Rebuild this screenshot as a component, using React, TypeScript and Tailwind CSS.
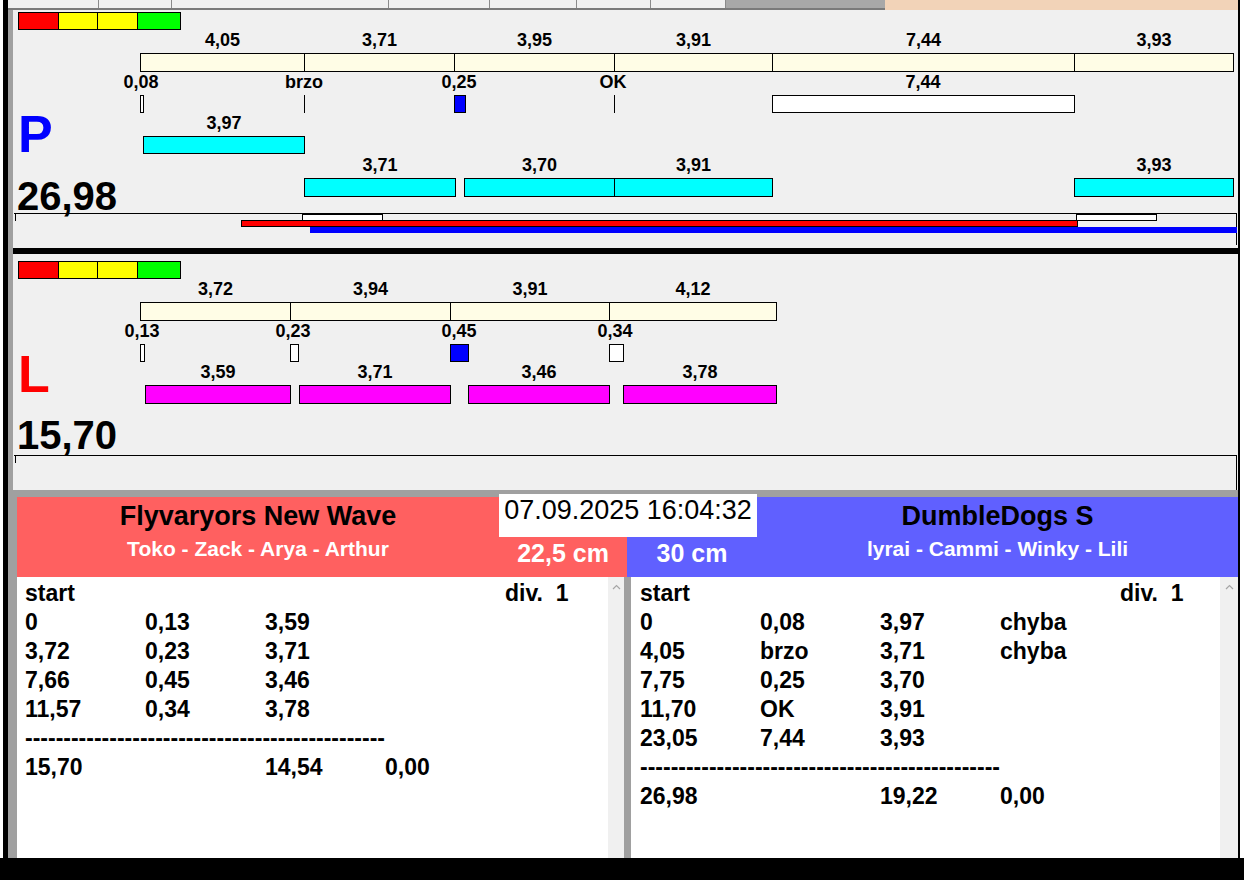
import React from 'react';

type Box = { l: number; t: number; w: number; h: number; c: string };
type Lbl = { x: number; t: number; text: string };

const CREAM = 'border border-black bg-[#fffde6]';
const WHITE = 'border border-black bg-white';
const LINE = 'bg-black';
const BLUE = 'border border-black bg-[#0000ff]';
const CYAN = 'border border-black bg-[#00ffff]';
const MAGENTA = 'border border-black bg-[#ff00ff]';

// a row of touching segments, borders shared on the boundaries
function segments(bounds: number[], t: number, h: number, c: string) {
  const out: Box[] = [];
  for (let i = 0; i < bounds.length - 1; i++) {
    out.push({ l: bounds[i], t, w: bounds[i + 1] - bounds[i] + 1, h, c });
  }
  return out;
}

function centred(boxes: Box[], t: number, texts: string[]): Lbl[] {
  return boxes.map((b, i) => ({ x: b.l + b.w / 2, t, text: texts[i] }));
}

// --- lane P ---
const pRow1 = segments([127, 291, 441, 601, 759, 1061, 1220], 43, 19, CREAM);
const pMarks: Box[] = [
  { l: 127, t: 85, w: 4, h: 18, c: WHITE },
  { l: 291, t: 85, w: 1, h: 18, c: LINE },
  { l: 441, t: 85, w: 12, h: 18, c: BLUE },
  { l: 601, t: 85, w: 1, h: 18, c: LINE },
  { l: 759, t: 85, w: 303, h: 18, c: WHITE },
];
const pRow3: Box[] = [{ l: 130, t: 126, w: 162, h: 18, c: CYAN }];
const pRow4: Box[] = [
  { l: 291, t: 168, w: 152, h: 19, c: CYAN },
  { l: 451, t: 168, w: 151, h: 19, c: CYAN },
  { l: 601, t: 168, w: 159, h: 19, c: CYAN },
  { l: 1061, t: 168, w: 160, h: 19, c: CYAN },
];
const pTrack: Box[] = [
  { l: 289, t: 204, w: 81, h: 7, c: WHITE },
  { l: 1063, t: 204, w: 81, h: 7, c: WHITE },
  { l: 228, t: 210, w: 837, h: 7, c: 'border border-black bg-[#ff0000]' },
  { l: 297, t: 217, w: 927, h: 6, c: 'bg-[#0000ff]' },
];
const pBoxes = [...pRow1, ...pMarks, ...pRow3, ...pRow4, ...pTrack];
const pLabels: Lbl[] = [
  ...centred(pRow1, 20, ['4,05', '3,71', '3,95', '3,91', '7,44', '3,93']),
  { x: 128, t: 62, text: '0,08' },
  { x: 291, t: 62, text: 'brzo' },
  { x: 446, t: 62, text: '0,25' },
  { x: 600, t: 62, text: 'OK' },
  { x: 910, t: 62, text: '7,44' },
  ...centred(pRow3, 103, ['3,97']),
  ...centred(pRow4, 145, ['3,71', '3,70', '3,91', '3,93']),
];

// --- lane L ---
const lRow1 = segments([127, 277, 437, 596, 763], 48, 19, CREAM);
const lMarks: Box[] = [
  { l: 127, t: 90, w: 5, h: 18, c: WHITE },
  { l: 277, t: 90, w: 9, h: 18, c: WHITE },
  { l: 437, t: 90, w: 19, h: 18, c: BLUE },
  { l: 596, t: 90, w: 15, h: 18, c: WHITE },
];
const lRow3: Box[] = [
  { l: 132, t: 131, w: 146, h: 19, c: MAGENTA },
  { l: 286, t: 131, w: 152, h: 19, c: MAGENTA },
  { l: 455, t: 131, w: 142, h: 19, c: MAGENTA },
  { l: 610, t: 131, w: 154, h: 19, c: MAGENTA },
];
const lBoxes = [...lRow1, ...lMarks, ...lRow3];
const lLabels: Lbl[] = [
  ...centred(lRow1, 25, ['3,72', '3,94', '3,91', '4,12']),
  { x: 129, t: 67, text: '0,13' },
  { x: 280, t: 67, text: '0,23' },
  { x: 446, t: 67, text: '0,45' },
  { x: 602, t: 67, text: '0,34' },
  ...centred(lRow3, 108, ['3,59', '3,71', '3,46', '3,78']),
];

function Chart({ boxes, labels }: { boxes: Box[]; labels: Lbl[] }) {
  return (
    <div className="absolute inset-0">
      {boxes.map((b, i) => (
        <div
          key={i}
          className={`absolute ${b.c}`}
          style={{ left: b.l, top: b.t, width: b.w, height: b.h }}
        />
      ))}
      {labels.map((lb, i) => (
        <div
          key={'l' + i}
          className="absolute w-[80px] text-center text-[18px] leading-[20px] font-bold text-black whitespace-nowrap"
          style={{ left: lb.x - 40, top: lb.t }}
        >
          {lb.text}
        </div>
      ))}
    </div>
  );
}

function ColorBar({ className }: { className: string }) {
  return (
    <div className={`flex w-[163px] h-[18px] border border-black ${className}`}>
      <div className="w-[40px] bg-[#ff0000] border-r border-black" />
      <div className="w-[39px] bg-[#ffff00] border-r border-black" />
      <div className="w-[40px] bg-[#ffff00] border-r border-black" />
      <div className="flex-1 bg-[#00ff00]" />
    </div>
  );
}

function TabStrip() {
  const tabs = [91, 73, 217, 101, 87, 74, 75];
  return (
    <div className="flex h-[10px]">
      <div className="w-[877px] flex flex-col">
        <div className="flex h-[8px]">
          {tabs.map((w, i) => (
            <div key={i} className="h-full bg-[#f0f0f0] border-r border-[#8a8a8a]" style={{ width: w }} />
          ))}
          <div className="flex-1 bg-[#a8a8a8]" />
        </div>
        <div className="h-[2px] bg-[#7a7a7a]" />
      </div>
      <div className="flex-1 bg-[#f2d3b8]" />
    </div>
  );
}

function ScrollBar({ className }: { className: string }) {
  return (
    <div className={`bg-[#f0f0f0] flex flex-col items-center ${className}`}>
      <svg width="9" height="6" viewBox="0 0 9 6" className="mt-[7px]">
        <polyline points="1,5 4.5,1.5 8,5" fill="none" stroke="#a6a6a6" strokeWidth="1.2" />
      </svg>
    </div>
  );
}

const DASHES = '-'.repeat(47);

function List({ rows, className }: { rows: string[][]; className: string }) {
  return (
    <div className={`bg-white pt-[2px] text-[23px] leading-[29px] font-bold text-black ${className}`}>
      <div className="flex">
        <div className="w-[480px]">start</div>
        <div className="whitespace-pre">div.  1</div>
      </div>
      {rows.map((r, i) =>
        r[0] === '--' ? (
          <div key={i} className="whitespace-nowrap">{DASHES}</div>
        ) : (
          <div key={i} className="flex">
            {r.map((c, j) => (
              <div key={j} className="w-[120px] whitespace-nowrap">{c}</div>
            ))}
          </div>
        )
      )}
    </div>
  );
}

const leftRows = [
  ['0', '0,13', '3,59'],
  ['3,72', '0,23', '3,71'],
  ['7,66', '0,45', '3,46'],
  ['11,57', '0,34', '3,78'],
  ['--'],
  ['15,70', '', '14,54', '0,00'],
];

const rightRows = [
  ['0', '0,08', '3,97', 'chyba'],
  ['4,05', 'brzo', '3,71', 'chyba'],
  ['7,75', '0,25', '3,70'],
  ['11,70', 'OK', '3,91'],
  ['23,05', '7,44', '3,93'],
  ['--'],
  ['26,98', '', '19,22', '0,00'],
];

export default function App() {
  return (
    <div className="w-[1244px] h-[880px] flex flex-col bg-black overflow-hidden font-['Liberation_Sans',Arial,sans-serif] text-black">
      <div className="flex flex-1 min-h-0">
        <div className="w-[3px] bg-white" />
        <div className="w-[5px] bg-black" />
        <div className="flex-1 min-w-0 flex flex-col">
          <TabStrip />
          <div className="flex flex-1 min-h-0">
            <div className="w-[5px] bg-[#a0a0a0]" />
            <div className="flex-1 min-w-0 flex flex-col">
              {/* lane P */}
              <div className="relative h-[238px] bg-[#f0f0f0] flex flex-col">
                <ColorBar className="mt-[2px] ml-[5px]" />
                <div className="mt-[78px] ml-[5px] h-[52px] text-[52px] leading-[52px] font-bold text-[#0000ff]">P</div>
                <div className="mt-[20px] ml-[4px] h-[32px] text-[40px] leading-[32px] font-bold">26,98</div>
                <div className="mt-[1px] mx-[1px] h-[32px] border-t border-r border-black">
                  <div className="ml-px w-px h-[7px] bg-black" />
                </div>
                <Chart boxes={pBoxes} labels={pLabels} />
              </div>
              <div className="h-[6px] bg-black" />
              {/* lane L */}
              <div className="relative h-[236px] bg-[#f0f0f0] flex flex-col">
                <ColorBar className="mt-[7px] ml-[5px]" />
                <div className="mt-[69px] ml-[5px] h-[52px] text-[52px] leading-[52px] font-bold text-[#ff0000]">L</div>
                <div className="mt-[19px] ml-[4px] h-[32px] text-[40px] leading-[32px] font-bold">15,70</div>
                <div className="mt-[4px] mx-[1px] flex-1 border-t border-r border-black">
                  <div className="ml-px w-px h-[7px] bg-black" />
                </div>
                <Chart boxes={lBoxes} labels={lLabels} />
              </div>
              <div className="h-[7px] bg-[#a0a0a0]" />
              {/* teams */}
              <div className="h-[361px] flex bg-[#a0a0a0] pl-[4px]">
                <div className="flex-1 min-w-0 flex flex-col">
                  <div className="h-[80px] flex">
                    <div className="w-[482px] bg-[#ff6060] flex flex-col items-center pt-[3px]">
                      <div className="text-[27px] leading-[32px] font-bold whitespace-nowrap">Flyvaryors New Wave</div>
                      <div className="mt-[5px] text-[21px] leading-[24px] font-bold text-white whitespace-nowrap">Toko - Zack - Arya - Arthur</div>
                    </div>
                    <div className="w-[258px] flex flex-col">
                      <div className="relative -mt-[3px] h-[43px] bg-white pt-[1px] text-center text-[27px] leading-[31px] whitespace-nowrap">
                        07.09.2025 16:04:32
                      </div>
                      <div className="flex flex-1">
                        <div className="w-[128px] bg-[#ff6060] flex justify-center pt-[2px] text-[25px] leading-[28px] font-bold text-white whitespace-nowrap">22,5 cm</div>
                        <div className="flex-1 bg-[#6060ff] flex justify-center pt-[2px] text-[25px] leading-[28px] font-bold text-white whitespace-nowrap">30 cm</div>
                      </div>
                    </div>
                    <div className="flex-1 bg-[#6060ff] flex flex-col items-center pt-[3px]">
                      <div className="text-[27px] leading-[32px] font-bold whitespace-nowrap">DumbleDogs S</div>
                      <div className="mt-[5px] text-[21px] leading-[24px] font-bold text-white whitespace-nowrap">lyrai - Cammi - Winky - Lili</div>
                    </div>
                  </div>
                  <div className="flex flex-1 min-h-0">
                    <List rows={leftRows} className="w-[591px] pl-[8px]" />
                    <ScrollBar className="w-[16px]" />
                    <div className="w-[7px] bg-[#a0a0a0]" />
                    <List rows={rightRows} className="flex-1 min-w-0 pl-[9px]" />
                    <ScrollBar className="w-[18px]" />
                  </div>
                </div>
              </div>
            </div>
          </div>
        </div>
        <div className="w-[2px] bg-black" />
        <div className="w-[4px] bg-white" />
      </div>
      <div className="h-[22px] bg-black" />
    </div>
  );
}
